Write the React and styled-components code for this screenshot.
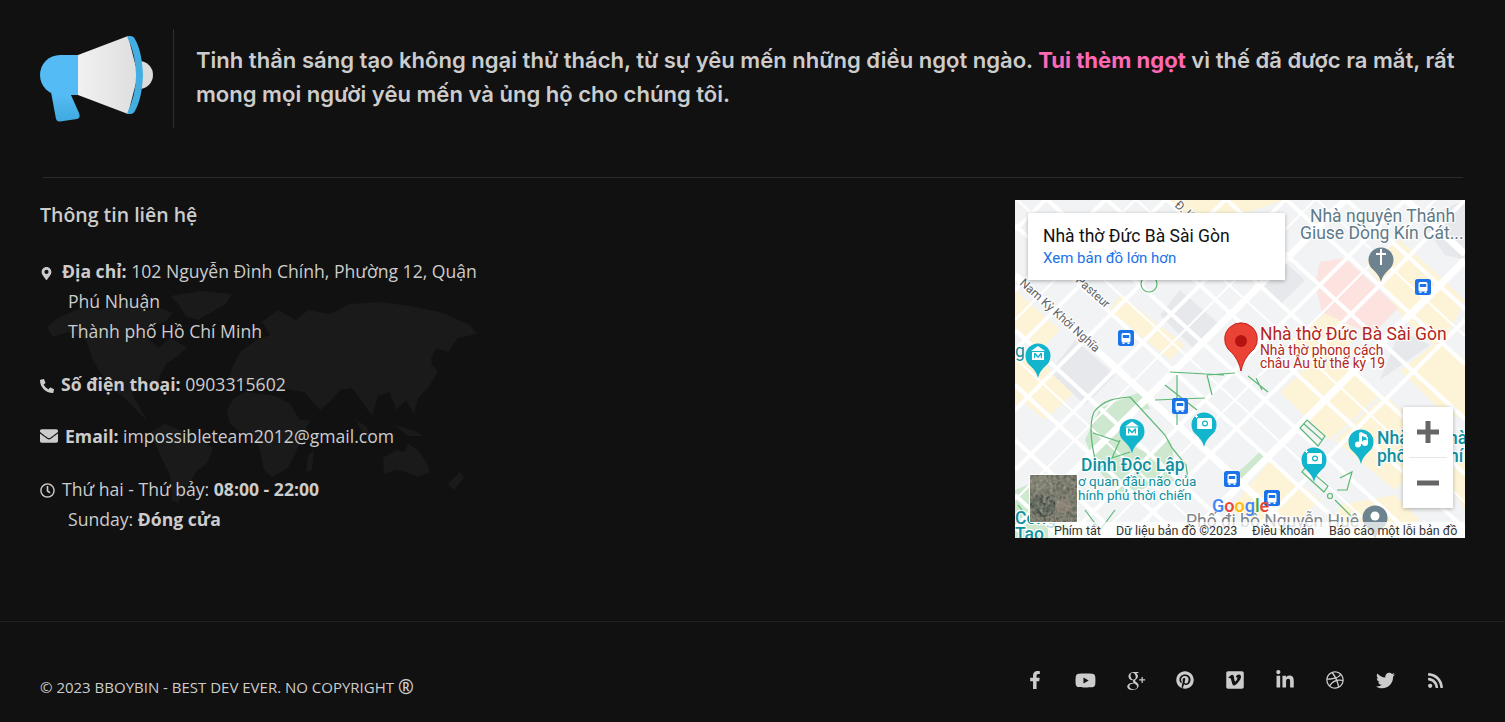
import React from 'react'
import styled, { createGlobalStyle } from 'styled-components'
import {
  FaMapMarkerAlt, FaPhoneAlt, FaEnvelope, FaRegClock, FaFacebookF, FaYoutube,
  FaPinterest, FaVimeo, FaLinkedinIn, FaDribbble, FaTwitter, FaRss,
} from 'react-icons/fa'
import { TiSocialGooglePlus } from 'react-icons/ti'

const Global = createGlobalStyle`
  html, body { margin: 0; padding: 0; background: #111; }
  body { font-family: "Open Sans", "Liberation Sans", sans-serif; color: #ccc; }
`

const Page = styled.div`
  width: 1505px;
  height: 722px;
  overflow: hidden;
  background: #111;
`
const Intro = styled.section`
  display: flex;
  align-items: center;
  padding: 29px 40px 0;
`
const Horn = styled.svg`
  width: 113px;
  height: 86px;
  flex: none;
`
const IntroText = styled.p`
  margin: 0 0 0 20px;
  padding: 14px 0 17px 22px;
  border-left: 1px solid #2e2e2e;
  width: 1270px;
  font-family: "Inter", "Liberation Sans", sans-serif;
  font-weight: 600;
  font-size: 22.05px;
  line-height: 34px;
  color: #ccc;
  b { color: #ff69b4; font-weight: 700; }
`
const Rule = styled.div`
  height: 1px;
  width: 1420px;
  margin: 49px 0 0 43px;
  background: #2b2b2b;
`
const Main = styled.main`
  position: relative;
  display: flex;
  justify-content: space-between;
  padding: 22px 40px 0;
`
const Contact = styled.div`
  position: relative;
  width: 440px;
`
const WorldMap = styled.svg`
  position: absolute;
  left: 0;
  top: 80px;
  width: 445px;
  height: 225px;
`
const Title = styled.h4`
  position: relative;
  margin: 0 0 28px;
  padding-top: 2px;
  font-size: 19.5px;
  line-height: 26px;
  font-weight: 600;
  color: #ccc;
`
const Row = styled.div`
  position: relative;
  margin-bottom: 22.6px;
  padding-left: 28px;
  text-indent: -28px;
  font-size: 17.6px;
  line-height: 30px;
  color: #ccc;
  &:last-child { margin-bottom: 0; }
  b { font-weight: 700; }
  svg {
    display: inline-block;
    width: ${p => p.$icon}px;
    height: ${p => p.$icon}px;
    margin-right: ${p => p.$gap}px;
    vertical-align: -2px;
    color: #ccc;
  }
`
const Line = styled.span`
  display: block;
  text-indent: 0;
`
const MapBox = styled.div`
  position: relative;
  width: 450px;
  height: 338px;
  overflow: hidden;
  font-family: Roboto, "Liberation Sans", sans-serif;
`
const MapArt = styled.svg`
  display: block;
  width: 450px;
  height: 338px;
`
const MapLabel = styled.text`
  font-family: Roboto, "Liberation Sans", sans-serif;
  font-size: ${p => p.$size || 14}px;
  font-weight: ${p => p.$weight || 400};
  fill: ${p => p.$color};
  stroke: rgba(255, 255, 255, .85);
  stroke-width: 2.5px;
  paint-order: stroke;
`
const PlaceCard = styled.div`
  position: absolute;
  left: 13px;
  top: 13px;
  width: 257px;
  height: 67px;
  box-sizing: border-box;
  padding: 12px 15px;
  background: #fff;
  box-shadow: 0 1px 4px rgba(0, 0, 0, .3);
`
const PlaceName = styled.div`
  font-size: 17.5px;
  line-height: 22px;
  color: #111;
  white-space: nowrap;
`
const PlaceLink = styled.div`
  font-size: 15px;
  line-height: 22px;
  color: #1a73e8;
`
const Zoom = styled.div`
  position: absolute;
  right: 12px;
  top: 207px;
  width: 50px;
  height: 101px;
  background: #fff;
  box-shadow: 0 1px 4px rgba(0, 0, 0, .3);
`
const ZoomBtn = styled.div`
  height: 50px;
  display: flex;
  align-items: center;
  justify-content: center;
  & + & { height: 50px; border-top: 1px solid #e6e6e6; width: 38px; margin: 0 auto; }
`
const Thumb = styled.div`
  position: absolute;
  left: 14px;
  top: 274px;
  width: 47px;
  height: 47px;
  border: 1px solid #fff;
  border-radius: 2px;
  overflow: hidden;
  svg { display: block; }
`
const Attribution = styled.div`
  position: absolute;
  left: 33px;
  right: 0;
  bottom: 0;
  height: 16px;
  display: flex;
  align-items: center;
  padding-left: 6px;
  background: rgba(255, 255, 255, .72);
  font-size: 12.5px;
  color: #333;
  white-space: nowrap;
`
const AttrItem = styled.span`
  width: ${p => p.$w}px;
  flex: none;
`
const Footer = styled.footer`
  margin-top: 83px;
  height: 100px;
  border-top: 1px solid #222;
  display: flex;
  justify-content: space-between;
  align-items: flex-start;
  padding: 0 45px 0 40px;
`
const Copy = styled.div`
  margin-top: 55px;
  font-size: 15px;
  line-height: 20px;
  color: #ccc;
  span { font-size: 19px; line-height: 14px; font-weight: 600; vertical-align: -1px; }
`
const Socials = styled.div`
  display: flex;
  margin-top: 46px;
`
const Social = styled.a`
  width: 50px;
  height: 24px;
  display: flex;
  align-items: center;
  justify-content: center;
  color: #ccc;
  font-size: ${p => p.$size}px;
`

const roadsA = [-270, -215, -160, -105, -50, 5, 60, 115, 170, 225, 275, 330, 385, 440, 495]
const roadsB = [230, 290, 350, 410, 470, 530, 590, 650, 710, 770]
const minorA = [-78, 88, 198, 358]
const minorB = [320, 500, 620]
const wideA = [-160, 275]
const wideB = [530, 710]

const yellow = [
  '1015,290 1060,330 1040,350 1015,330',
  '1015,350 1045,375 1015,410',
  '1030,350 1075,392 1045,420 1015,395',
  '1120,295 1185,345 1170,360 1110,310',
  '1165,200 1285,200 1240,215 1200,225',
  '1365,262 1400,240 1465,300 1440,350 1405,320',
  '1280,392 1330,345 1380,395 1330,440',
  '1335,440 1385,395 1440,445 1395,490',
  '1270,460 1320,500 1280,538 1230,510',
  '1340,505 1395,495 1420,520 1380,538 1330,538',
  '1400,370 1440,340 1465,360 1465,420 1440,410',
  '1290,340 1330,310 1360,335 1320,370',
  '1440,470 1465,450 1465,510',
]
const grey = [
  '1075,340 1115,375 1085,405 1050,372',
  '1265,245 1305,280 1280,305 1240,270',
  '1180,290 1220,325 1195,350 1160,315',
  '1380,380 1430,345 1400,330',
  '1420,220 1465,200 1465,260 1445,255',
]

const BusStop = ({ x, y }) => (
  <g transform={`translate(${x - 8} ${y - 8})`}>
    <rect width="16" height="16" rx="2.5" fill="#1a73e8" />
    <rect x="3.5" y="3" width="9" height="9.5" rx="1.5" fill="#fff" />
    <rect x="4.8" y="5" width="6.4" height="3" fill="#1a73e8" />
    <rect x="4.5" y="12.5" width="2" height="1.5" fill="#fff" />
    <rect x="9.5" y="12.5" width="2" height="1.5" fill="#fff" />
  </g>
)

const Pin = ({ x, y, color = '#12b5cb', children }) => (
  <g transform={`translate(${x} ${y})`}>
    <path d="M0 24C-1.5 18-4 15.5-8 11.5A12.5 12.5 0 1 1 8 11.5C4 15.5 1.500 18 0 24Z" fill={color} />
    {children}
  </g>
)
const Museum = () => (
  <g fill="#fff">
    <path d="M-7-3 0-8 7-3Z" />
    <rect x="-6" y="-2" width="12" height="8" />
    <path d="M-4 4V-1H-2.600L0 2 2.600-1H4V4H2.800V1.200L0 4-2.800 1.200V4Z" fill="#12b5cb" />
  </g>
)
const Camera = () => (
  <g fill="#fff">
    <rect x="-7" y="-5" width="15" height="11" rx="1.500" />
    <circle cx="1" cy="0.500" r="3" fill="#12b5cb" />
    <circle cx="1" cy="0.500" r="1.800" />
    <path d="M-8-8H-7V-7H-6V-6H-7V-5H-8V-6H-9V-7H-8Z" />
  </g>
)
const Note = () => (
  <g fill="#fff">
    <path d="M-2-7 0-8 6-5V-2L1-4V4H-2Z" />
    <circle cx="-3" cy="4.500" r="3" />
    <circle cx="4" cy="3" r="3" />
    <rect x="5.500" y="-3" width="1.500" height="6" />
  </g>
)

const CityMap = () => (
  <MapArt viewBox="1015 200 450 338">
    <rect x="1015" y="200" width="450" height="338" fill="#f1f3f4" />
    {yellow.map((p, i) => <polygon key={`y${i}`} points={p} fill="#fdf4d8" />)}
    {grey.map((p, i) => <polygon key={`g${i}`} points={p} fill="#e6e8eb" />)}
    <polygon points="1320,262 1345,258 1398,308 1372,335 1322,312 1315,285" fill="#fce3e0" />
    <path d="M1100 408 1140 392 1172 445 1176 480 1120 495 1098 470 1085 440Z" fill="#cde8cf" />
    <path d="M1015 490 1040 480 1075 538H1015Z" fill="#cde8cf" />
    <path d="M1230 480 1262 450 1268 456 1240 490Z" fill="#cde8cf" />
    <circle cx="1148" cy="430" r="21" fill="#f1f3f4" />

    {minorA.map(c => <line key={`ma${c}`} x1="1015" x2="1465" y1={c} y2={c + 414} stroke="#fff" strokeWidth="2" />)}
    {minorB.map(c => <line key={`mb${c}`} x1="1015" x2="1465" y1={c} y2={c - 450} stroke="#fff" strokeWidth="2" />)}
    {roadsA.map(c => (
      <line key={`a${c}`} x1="1015" x2="1465" y1={c} y2={c + 414} stroke="#fff" strokeWidth={wideA.includes(c) ? 7 : 4} />
    ))}
    {roadsB.map(c => (
      <line key={`b${c}`} x1="1015" x2="1465" y1={c} y2={c - 450} stroke="#fff" strokeWidth={wideB.includes(c) ? 7 : 4} />
    ))}

    <g fill="none" stroke="#5cb874" strokeWidth="1.200">
      <path d="M1094 412C1105 398 1120 398 1130 397L1165 435 1172 448 1186 465 1188 480" />
      <path d="M1094 412C1088 425 1092 450 1098 470L1112 458 1120 440M1093 433 1120 442M1112 458 1130 452" />
      <path d="M1177 375 1177 425M1155 400 1205 398M1165 385 1197 410M1207 375 1212 395M1207 375 1235 373M1170 372 1224 375" />
      <path d="M1300 428 1318 446 1325 436 1307 420ZM1304 424 1322 440" />
      <path d="M1302 472 1324 492 1328 486 1306 467Z" />
      <path d="M1340 478 1352 472 1347 490 1337 490" />
      <path d="M1335 500 1355 520" />
      <circle cx="1330" cy="496" r="2.500" />
      <circle cx="1149" cy="284" r="8" />
      <path d="M1018 505 1030 520 1040 508M1085 510 1100 530 1115 510M1248 376 1268 392M1256 378 1262 390" />
    </g>

    <MapLabel x="1310" y="222" $size={17.500} $color="#5f7a88">Nhà nguyện Thánh</MapLabel>
    <MapLabel x="1300" y="239" $size={17.500} $color="#5f7a88">Giuse Dòng Kín Cát...</MapLabel>
    <MapLabel x="0" y="0" $size={12} $color="#5f6368" transform="translate(1019 284) rotate(42)">Nam Kỳ Khởi Nghĩa</MapLabel>
    <MapLabel x="0" y="0" $size={12} $color="#5f6368" transform="translate(1075 281) rotate(42)">Pasteur</MapLabel>
    <MapLabel x="0" y="0" $size={12} $color="#5f6368" transform="translate(1174 206) rotate(42)">Đ. Kh</MapLabel>
    <MapLabel x="1081" y="471" $size={17.500} $weight={500} $color="#0f8fa0">Dinh Độc Lập</MapLabel>
    <MapLabel x="1078" y="486" $size={13.500} $color="#0f8fa0">ơ quan đầu não của</MapLabel>
    <MapLabel x="1078" y="500" $size={13.500} $color="#0f8fa0">hính phủ thời chiến</MapLabel>
    <MapLabel x="1377" y="444" $size={17.500} $weight={500} $color="#0f8fa0">Nhà hát thành</MapLabel>
    <MapLabel x="1377" y="462" $size={17.500} $weight={500} $color="#0f8fa0">phố Hồ Chí Minh</MapLabel>
    <MapLabel x="1015" y="357" $size={17.500} $color="#0f8fa0">g</MapLabel>
    <MapLabel x="1015" y="524" $size={17.500} $weight={500} $color="#0f8fa0">Công</MapLabel>
    <MapLabel x="1015" y="540" $size={17.500} $weight={500} $color="#0f8fa0">Tạo</MapLabel>
    <MapLabel x="1186" y="527" $size={17.500} $color="#80868b">Phố đi bộ Nguyễn Huệ</MapLabel>
    <MapLabel x="1260" y="340" $size={17.500} $color="#b3261e">Nhà thờ Đức Bà Sài Gòn</MapLabel>
    <MapLabel x="1260" y="355" $size={13.800} $color="#b3261e">Nhà thờ phong cách</MapLabel>
    <MapLabel x="1260" y="368" $size={13.800} $color="#b3261e">châu Âu từ thế kỷ 19</MapLabel>

    <BusStop x={1126} y={338} />
    <BusStop x={1180} y={406} />
    <BusStop x={1232} y={479} />
    <BusStop x={1272} y={498} />
    <BusStop x={1423} y={287} />
    <Pin x={1038} y={354}><Museum /></Pin>
    <Pin x={1132} y={429.500}><Museum /></Pin>
    <Pin x={1204} y={423}><Camera /></Pin>
    <Pin x={1314} y={458}><Camera /></Pin>
    <Pin x={1361} y={440}><Note /></Pin>
    <Pin x={1381} y={258} color="#6d8490">
      <path d="M-1 -9H1V-5H5V-3H1V7H-1V-3H-5V-5H-1Z" fill="#fff" />
    </Pin>
    <Pin x={1375} y={516} color="#6d8490"><circle r="4.500" fill="#fff" /></Pin>

    <path d="M1241 371C1238 358 1233 354 1228 349A16.300 16.300 0 1 1 1254 349C1249 354 1244 358 1241 371Z" fill="#ea4335" stroke="#c5221f" />
    <circle cx="1241" cy="341" r="6" fill="#b31412" />

    <text x="1212" y="512" fontFamily="Roboto, sans-serif" fontWeight="500" fontSize="18">
      <tspan fill="#4285f4">G</tspan><tspan fill="#ea4335">o</tspan><tspan fill="#fbbc05">o</tspan>
      <tspan fill="#4285f4">g</tspan><tspan fill="#34a853">l</tspan><tspan fill="#ea4335">e</tspan>
    </text>
  </MapArt>
)

const ZoomIcon = ({ minus }) => (
  <svg width="24" height="24" viewBox="0 0 24 24">
    <rect x="1" y="9.500" width="22" height="5" fill="#666" />
    {!minus && <rect x="9.500" y="1" width="5" height="22" fill="#666" />}
  </svg>
)

const Satellite = () => (
  <svg width="47" height="47" viewBox="0 0 47 47">
    <filter id="sat">
      <feTurbulence type="fractalNoise" baseFrequency=".3" numOctaves="3" seed="4" />
      <feColorMatrix values="0 0 0 0 .36  0 0 0 0 .36  0 0 0 0 .3  .9 .9 0 0 -.45" />
    </filter>
    <rect width="47" height="47" fill="#5a5b4e" />
    <ellipse cx="13" cy="31" rx="13" ry="11" fill="#333d33" />
    <ellipse cx="33" cy="31" rx="8" ry="7" fill="#7a6a5e" />
    <ellipse cx="10" cy="8" rx="12" ry="7" fill="#6e6e5e" />
    <rect width="47" height="47" filter="url(#sat)" />
    <rect x="25" width="1" height="47" fill="#8a8a7c" opacity=".4" />
  </svg>
)

const App = () => {
  const socials = [
    [FaFacebookF, 18], [FaYoutube, 21], [TiSocialGooglePlus, 29], [FaPinterest, 18], [FaVimeo, 20],
    [FaLinkedinIn, 20], [FaDribbble, 18], [FaTwitter, 19], [FaRss, 17],
  ]
  return (
    <Page>
      <Global />
      <Intro>
        <Horn viewBox="40 36 113 86">
          <defs>
            <linearGradient id="cone" x1="0" x2="1">
              <stop offset="0" stopColor="#f1f1f1" />
              <stop offset="1" stopColor="#dedede" />
            </linearGradient>
            <linearGradient id="grip" x1="0" x2="0" y1="0" y2="1">
              <stop offset="0" stopColor="#57bdf5" />
              <stop offset="1" stopColor="#3fa9e0" />
            </linearGradient>
          </defs>
          <path d="M139 61A14 14 0 0 1 139 89Z" fill="#dcdcdc" />
          <path d="M51 92 56 119Q57 122 60 121.500L77 119Q81 118 79 113L71 95Z" fill="url(#grip)" />
          <path d="M78 55 128 36 138 75 128 114 78 95Z" fill="url(#cone)" />
          <path d="M127 36.500Q131 35 134 37.500Q142 50 143 75Q142 100 134 112.500Q131 115 127 113.500Q136 95 136 75Q136 55 127 36.500Z" fill="#43aee2" />
          <path d="M78 55H60A20 20 0 0 0 60 95H78Z" fill="#55bbf5" />
        </Horn>
        <IntroText>
          Tinh thần sáng tạo không ngại thử thách, từ sự yêu mến những điều ngọt ngào. <b>Tui thèm ngọt</b> vì thế đã được ra mắt, rất mong mọi người yêu mến và ủng hộ cho chúng tôi.
        </IntroText>
      </Intro>
      <Rule />
      <Main>
        <Contact>
          <WorldMap viewBox="40 280 445 225">
            <g fill="#1a1a1a">
              <path d="M47 327 58 318 83 307 100 310 118 303 133 303 145 310 160 308 173 313 165 322 150 326 145 335 158 348 170 338 187 347 178 356 167 363 160 375 157 392 150 380 138 384 132 394 147 420 140 414 127 400 112 388 100 372 93 360 86 340 68 332 53 337Z" />
              <path d="M170 296 200 291 232 294 226 304 212 312 198 320 186 316 178 304Z" />
              <path d="M150 432 165 424 180 430 198 440 213 447 208 462 196 472 186 488 178 503 172 500 170 475 160 455Z" />
              <path d="M227 410 234 398 246 392 262 394 276 396 290 404 300 420 310 420 302 438 296 452 288 468 272 477 264 470 260 450 254 436 240 432 230 424Z" />
              <path d="M227 382 232 368 240 352 256 340 270 335 262 322 278 310 296 320 308 310 330 314 350 304 380 302 410 306 440 312 470 325 477 334 458 338 448 352 436 348 430 362 438 372 428 388 418 398 414 414 406 400 396 410 390 392 378 396 372 416 362 402 352 388 340 390 330 402 320 410 304 392 290 390 276 386 262 388 246 382Z" />
              <path d="M383 458 396 450 404 452 408 444 418 450 426 462 430 472 418 477 406 472 396 470 384 474Z" />
              <path d="M356 420 366 426 372 440 362 432Z" />
              <path d="M394 425 412 430 424 436 408 436Z" />
              <path d="M448 484 460 472 464 478 454 490Z" />
              <path d="M420 350 426 342 432 362 424 376Z" />
              <path d="M308 456 314 450 312 470 306 472Z" />
            </g>
          </WorldMap>
          <Title>Thông tin liên hệ</Title>
          <Row $icon={13} $gap={9}>
            <FaMapMarkerAlt /><b>Địa chỉ:</b> 102 Nguyễn Đình Chính, Phường 12, Quận Phú Nhuận
            <Line>Thành phố Hồ Chí Minh</Line>
          </Row>
          <Row $icon={14} $gap={7}>
            <FaPhoneAlt /><b>Số điện thoại:</b> 0903315602
          </Row>
          <Row $icon={18} $gap={7}>
            <FaEnvelope /><b>Email:</b> impossibleteam2012@gmail.com
          </Row>
          <Row $icon={15} $gap={7}>
            <FaRegClock />Thứ hai - Thứ bảy: <b>08:00 - 22:00</b>
            <Line>Sunday: <b>Đóng cửa</b></Line>
          </Row>
        </Contact>
        <MapBox>
          <CityMap />
          <PlaceCard>
            <PlaceName>Nhà thờ Đức Bà Sài Gòn</PlaceName>
            <PlaceLink>Xem bản đồ lớn hơn</PlaceLink>
          </PlaceCard>
          <Zoom>
            <ZoomBtn><ZoomIcon /></ZoomBtn>
            <ZoomBtn><ZoomIcon minus /></ZoomBtn>
          </Zoom>
          <Thumb><Satellite /></Thumb>
          <Attribution>
            <AttrItem $w={62}>Phím tắt</AttrItem>
            <AttrItem $w={136}>Dữ liệu bản đồ ©2023</AttrItem>
            <AttrItem $w={77}>Điều khoản</AttrItem>
            <AttrItem $w={130}>Báo cáo một lỗi bản đồ</AttrItem>
          </Attribution>
        </MapBox>
      </Main>
      <Footer>
        <Copy>© 2023 BBOYBIN - BEST DEV EVER. NO COPYRIGHT <span>®</span></Copy>
        <Socials>
          {socials.map(([Icon, size], i) => <Social key={i} $size={size}><Icon /></Social>)}
        </Socials>
      </Footer>
    </Page>
  )
}

export default App
